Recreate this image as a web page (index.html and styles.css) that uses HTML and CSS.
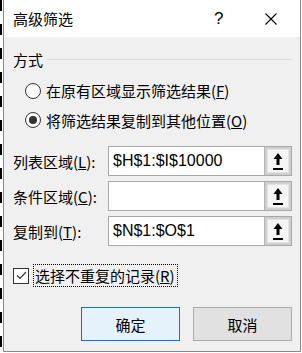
FILE: index.html
```html
<!DOCTYPE html>
<html lang="zh-CN">
<head>
    <meta charset="UTF-8">
    <meta name="viewport" content="width=device-width, initial-scale=1.0">
    <title>高级筛选</title>
    <link rel="stylesheet" href="styles.css">
</head>
<body>
    <div class="dialog">
        <header class="titlebar">
            <span class="title">高级筛选</span>
            <span class="help">?</span>
            <span class="close">
                <svg width="12" height="12" viewBox="0 0 12 12">
                    <path d="M0.5 0.5 L11.5 11.5 M11.5 0.5 L0.5 11.5" stroke="#000" stroke-width="1.1" fill="none"/>
                </svg>
            </span>
        </header>
        <main class="body">
            <div class="group-head">
                <span>方式</span>
                <span class="rule"></span>
            </div>

            <div class="radios">
                <div class="radio-row">
                    <span class="radio"></span>
                    <span>在原有区域显示筛选结果(<u>F</u>)</span>
                </div>
                <div class="radio-row">
                    <span class="radio checked"></span>
                    <span>将筛选结果复制到其他位置(<u>O</u>)</span>
                </div>
            </div>

            <div class="fields">
                <div class="field">
                    <label>列表区域(<u>L</u>):</label>
                    <div class="range">
                        <span class="value">$H$1:$I$10000</span>
                        <span class="pick"><span class="pick-inner">
                            <svg width="10" height="17" viewBox="0 0 10 17"><polygon points="5,0 9.5,6 6.5,6 6.5,12 3.5,12 3.5,6 0.5,6" fill="#000"/><rect x="0" y="15" width="10" height="2" fill="#000"/></svg>
                        </span></span>
                    </div>
                </div>
                <div class="field">
                    <label>条件区域(<u>C</u>):</label>
                    <div class="range">
                        <span class="value"></span>
                        <span class="pick"><span class="pick-inner">
                            <svg width="10" height="17" viewBox="0 0 10 17"><polygon points="5,0 9.5,6 6.5,6 6.5,12 3.5,12 3.5,6 0.5,6" fill="#000"/><rect x="0" y="15" width="10" height="2" fill="#000"/></svg>
                        </span></span>
                    </div>
                </div>
                <div class="field">
                    <label>复制到(<u>T</u>):</label>
                    <div class="range">
                        <span class="value">$N$1:$O$1</span>
                        <span class="pick"><span class="pick-inner">
                            <svg width="10" height="17" viewBox="0 0 10 17"><polygon points="5,0 9.5,6 6.5,6 6.5,12 3.5,12 3.5,6 0.5,6" fill="#000"/><rect x="0" y="15" width="10" height="2" fill="#000"/></svg>
                        </span></span>
                    </div>
                </div>
            </div>

            <div class="check-row">
                <span class="checkbox">
                    <svg width="13" height="13" viewBox="0 0 13 13"><path d="M2 6.5 L5 9.5 L11 3" stroke="#333" stroke-width="1.2" fill="none"/></svg>
                </span>
                <span class="focus">选择不重复的记录(<u>R</u>)</span>
            </div>

            <div class="buttons">
                <button class="btn primary">确定</button>
                <button class="btn">取消</button>
            </div>
        </main>
    </div>
</body>
</html>
```

FILE: styles.css
```css
html, body {
    margin: 0;
    padding: 0;
}

body {
    width: 302px;
    height: 353px;
    overflow: hidden;
    background-color: #fff;
    background-image: repeating-linear-gradient(to bottom, #000 0 11px, #fff 11px 24px);
    background-size: 2px 100%;
    background-repeat: no-repeat;
    font-family: "Noto Sans CJK SC", "Noto Sans", sans-serif;
    font-size: 15px;
    color: #000;
}

.dialog {
    margin-left: 3px;
    width: 298px;
    height: 352px;
    box-sizing: border-box;
    border: 1px solid #8a8a8a;
    border-top: none;
    background: #f0f0f0;
    display: flex;
    flex-direction: column;
}

.titlebar {
    height: 37px;
    flex: none;
    background: #fff;
    display: flex;
    align-items: center;
    padding-left: 9px;
    line-height: 20px;
}

.title {
    flex: 1;
    padding-top: 1px;
}

.help {
    width: 14px;
    font-family: "Liberation Sans", sans-serif;
    font-size: 17px;
    margin-right: 37px;
}

.close {
    display: flex;
    width: 12px;
    margin-right: 23px;
}

.body {
    padding: 11px 8px 0 9px;
}

.group-head {
    display: flex;
    align-items: center;
    height: 22px;
    gap: 4px;
}

.rule {
    flex: 1;
    height: 1px;
    background: #dcdcdc;
}

.radios {
    margin-top: 6px;
}

.radio-row {
    display: flex;
    align-items: center;
    height: 29.5px;
    padding-left: 12px;
    gap: 5px;
}

.radio {
    width: 16px;
    height: 16px;
    box-sizing: border-box;
    border: 1px solid #333;
    border-radius: 50%;
    background: #fff;
    display: flex;
    align-items: center;
    justify-content: center;
}

.radio.checked::after {
    content: "";
    width: 8px;
    height: 8px;
    border-radius: 50%;
    background: #333;
}

.fields {
    margin-top: 11px;
    display: flex;
    flex-direction: column;
    gap: 5px;
}

.field {
    display: flex;
    align-items: center;
    height: 30px;
}

.field label {
    width: 95px;
}

.range {
    flex: 1;
    height: 30px;
    box-sizing: border-box;
    border: 1px solid #a8a8a8;
    background: #fff;
    display: flex;
}

.value {
    flex: 1;
    padding-left: 4px;
    line-height: 27px;
    font-family: "Liberation Sans", sans-serif;
    font-size: 16px;
}

.pick {
    width: 27px;
    box-sizing: border-box;
    border-left: 1px solid #b4b4b4;
    background: #cfcfcf;
    padding: 2px;
    display: flex;
}

.pick-inner {
    flex: 1;
    background: #f5f5f5;
    border: 1px solid #e3e3e3;
    display: flex;
    align-items: center;
    justify-content: center;
}

.check-row {
    margin-top: 18px;
    display: flex;
    align-items: center;
    height: 23px;
    gap: 4px;
}

.checkbox {
    width: 16px;
    height: 16px;
    box-sizing: border-box;
    border: 1px solid #333;
    background: #fff;
    display: flex;
    align-items: center;
    justify-content: center;
}

.focus {
    border: 1px dotted #000;
    padding: 0 2px 0 1px;
    line-height: 21px;
}

.buttons {
    margin-top: 20px;
    display: flex;
    justify-content: flex-end;
    gap: 13px;
}

.btn {
    width: 99px;
    height: 34px;
    box-sizing: border-box;
    border: 1px solid #adadad;
    background: #e1e1e1;
    font-family: inherit;
    font-size: 15px;
    color: #000;
    padding: 0;
}

.btn.primary {
    border: 1px solid #0078d7;
    background: #e5f1fb;
}
```
